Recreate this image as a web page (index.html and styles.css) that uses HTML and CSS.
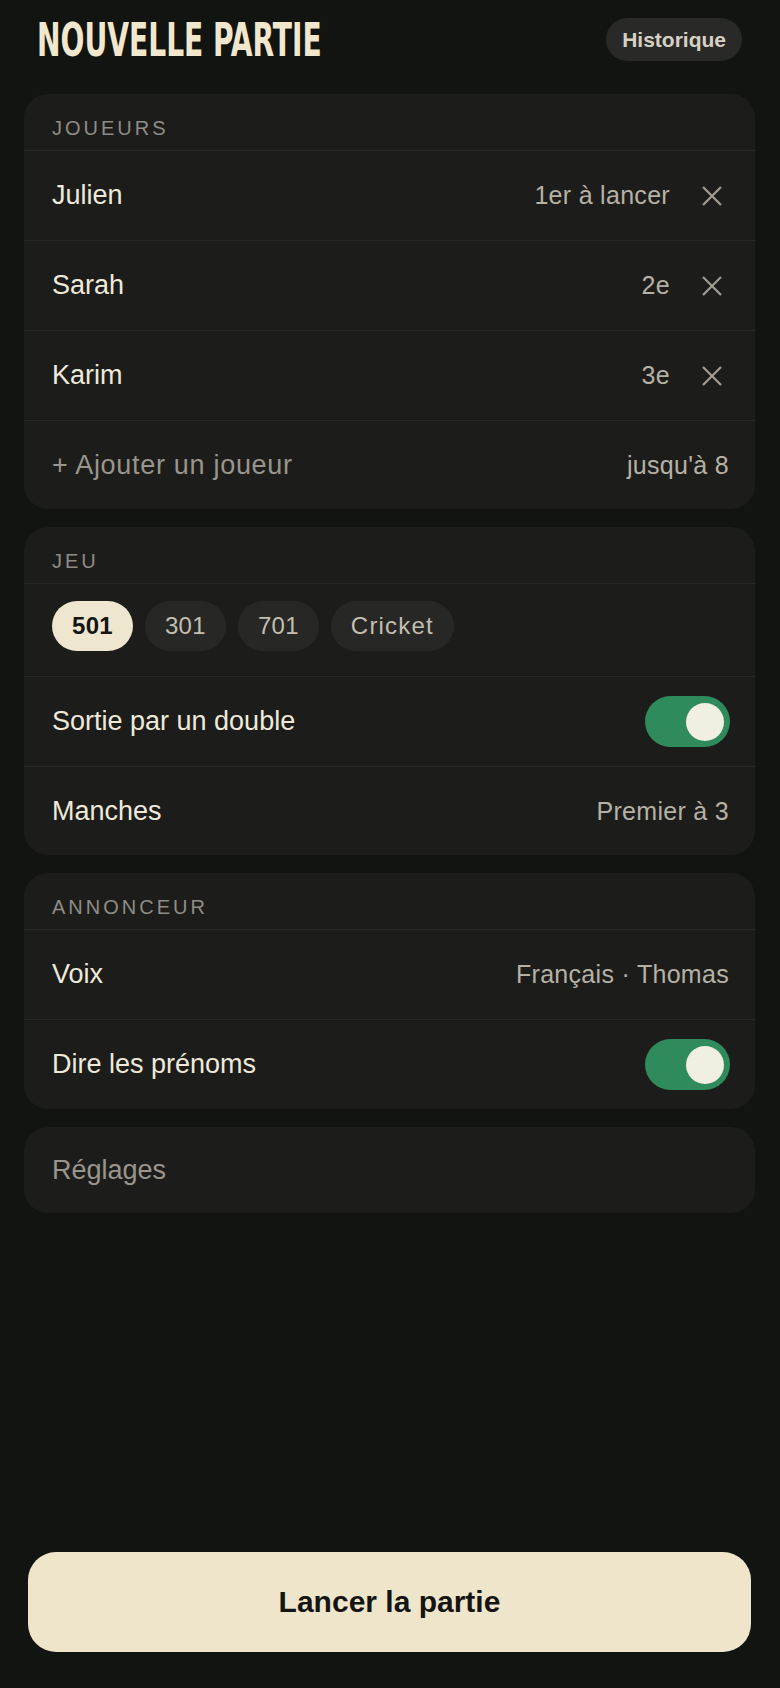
FILE: index.html
```html
<!DOCTYPE html>
<html lang="fr">

<head>
    <meta charset="UTF-8">
    <title>Nouvelle partie</title>
    <link rel="stylesheet" href="styles.css">
</head>

<body>
    <div class="screen">
        <header class="top">
            <h1 class="title">NOUVELLE PARTIE</h1>
            <button class="pill">Historique</button>
        </header>

        <section class="card">
            <div class="card-head">JOUEURS</div>
            <div class="row">
                <span class="label">Julien</span>
                <span class="side">
                    <span class="value">1er à lancer</span>
                    <svg class="remove" width="20" height="20" viewBox="0 0 20 20"><path d="M1 1L19 19M19 1L1 19" /></svg>
                </span>
            </div>
            <div class="row">
                <span class="label">Sarah</span>
                <span class="side">
                    <span class="value">2e</span>
                    <svg class="remove" width="20" height="20" viewBox="0 0 20 20"><path d="M1 1L19 19M19 1L1 19" /></svg>
                </span>
            </div>
            <div class="row">
                <span class="label">Karim</span>
                <span class="side">
                    <span class="value">3e</span>
                    <svg class="remove" width="20" height="20" viewBox="0 0 20 20"><path d="M1 1L19 19M19 1L1 19" /></svg>
                </span>
            </div>
            <div class="row last">
                <span class="label muted add">+ Ajouter un joueur</span>
                <span class="value">jusqu'à 8</span>
            </div>
        </section>

        <section class="card">
            <div class="card-head">JEU</div>
            <div class="row chips">
                <span class="chip active">501</span>
                <span class="chip">301</span>
                <span class="chip">701</span>
                <span class="chip">Cricket</span>
            </div>
            <div class="row">
                <span class="label">Sortie par un double</span>
                <span class="toggle on"><span class="knob"></span></span>
            </div>
            <div class="row last">
                <span class="label">Manches</span>
                <span class="value">Premier à 3</span>
            </div>
        </section>

        <section class="card">
            <div class="card-head">ANNONCEUR</div>
            <div class="row">
                <span class="label">Voix</span>
                <span class="value">Français · Thomas</span>
            </div>
            <div class="row">
                <span class="label">Dire les prénoms</span>
                <span class="toggle on"><span class="knob"></span></span>
            </div>
        </section>

        <section class="card">
            <div class="row solo">
                <span class="label muted">Réglages</span>
            </div>
        </section>

        <button class="launch">Lancer la partie</button>
    </div>
</body>

</html>
```

FILE: styles.css
```css
body {
    margin: 0;
    background-color: #121411;
    font-family: "Liberation Sans", Arial, sans-serif;
    color: #efe9da;
}

.screen {
    height: 1688px;
    box-sizing: border-box;
    display: flex;
    flex-direction: column;
    padding: 18px 25px 36px 24px;
}

.top {
    display: flex;
    justify-content: space-between;
    align-items: center;
    height: 43px;
    margin-bottom: 33px;
    padding-left: 13px;
}

.title {
    margin: 0;
    font-family: "DejaVu Sans Condensed", sans-serif;
    font-weight: bold;
    font-size: 47px;
    line-height: 43px;
    color: #f1e7cd;
    transform: scaleX(0.665);
    transform-origin: left center;
    white-space: nowrap;
}

.pill {
    height: 43px;
    padding: 0 16px;
    margin-right: 13px;
    border: none;
    border-radius: 22px;
    background-color: #292a27;
    color: #d6d1c4;
    font-family: "Liberation Sans", Arial, sans-serif;
    font-weight: bold;
    font-size: 21px;
}

.card {
    background-color: #1c1d1b;
    border-radius: 24px;
    margin-bottom: 18px;
    overflow: hidden;
}

.card-head {
    padding: 25px 28px 13px;
    font-size: 20px;
    line-height: 18px;
    letter-spacing: 3px;
    color: #8f8c85;
}

.row {
    display: flex;
    justify-content: space-between;
    align-items: center;
    min-height: 89px;
    padding: 0 26px 0 28px;
    border-top: 1px solid #272825;
}

.row.last {
    min-height: 88px;
}

.row.solo {
    min-height: 86px;
    border-top: none;
}

.label {
    font-size: 27px;
}

.muted {
    color: #99958c;
}

.add {
    letter-spacing: 0.7px;
}

.side {
    display: flex;
    align-items: center;
}

.value {
    font-size: 25px;
    letter-spacing: 0.3px;
    color: #b6b1a5;
}

.remove {
    margin-left: 32px;
    margin-right: 7px;
    stroke: #a19d94;
    stroke-width: 2.2;
    fill: none;
}

.chips {
    justify-content: flex-start;
    gap: 12px;
    min-height: 0;
    padding-top: 17px;
    padding-bottom: 25px;
}

.chip {
    height: 50px;
    line-height: 50px;
    padding: 0 20px;
    border-radius: 25px;
    background-color: #272825;
    color: #c3beb1;
    font-size: 24px;
    letter-spacing: 0.3px;
}

.chip:last-child {
    letter-spacing: 1.2px;
}

.chip.active {
    background-color: #efe6cf;
    color: #151613;
    font-weight: bold;
}

.toggle {
    display: flex;
    align-items: center;
    justify-content: flex-end;
    width: 85px;
    height: 51px;
    box-sizing: border-box;
    padding-right: 6px;
    margin-right: -1px;
    border-radius: 26px;
    background-color: #2f8a5c;
}

.knob {
    width: 38px;
    height: 38px;
    border-radius: 50%;
    background-color: #f1eee2;
}

.launch {
    margin: auto 4px 0 4px;
    height: 100px;
    border: none;
    border-radius: 28px;
    background-color: #efe5cb;
    color: #141512;
    font-family: "Liberation Sans", Arial, sans-serif;
    font-weight: bold;
    font-size: 30px;
}
```
